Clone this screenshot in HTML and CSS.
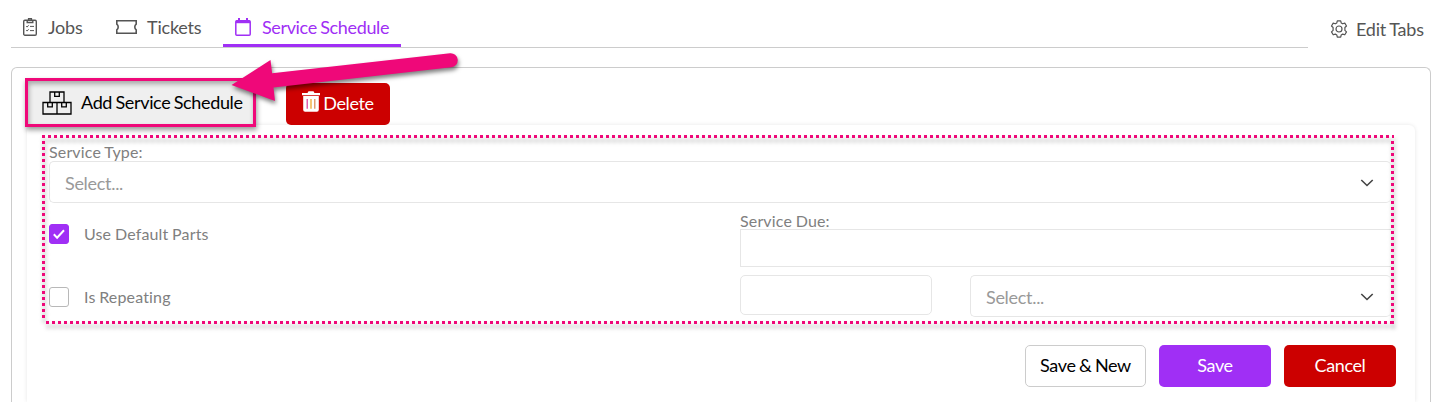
FILE: index.html
```html
<!DOCTYPE html>
<html lang="en">
<head>
  <meta charset="UTF-8">
  <meta name="viewport" content="width=device-width, initial-scale=1.0">
  <title>Service Schedule</title>
  <link rel="stylesheet" href="styles.css">
</head>
<body>
  <header class="topbar">
    <nav class="tabs">
      <a class="tab tab-jobs" href="#">
        <svg width="14" height="18" viewBox="0 0 14 18" fill="none" stroke="currentColor" stroke-width="1.4">
          <rect x=".7" y="2.2" width="12.6" height="15" rx="1.2"/>
          <path d="M4.2 2.2v2.3h5.6V2.2M5.6 2V.8h2.8V2"/>
          <path d="M3.2 8.2l.9.9 1.5-1.8M7 8.4h4M3.2 12.2l.9.9 1.5-1.8M7 12.6h4" stroke-width="1"/>
        </svg>
        <span>Jobs</span>
      </a>
      <a class="tab tab-tickets" href="#">
        <svg width="21" height="14" viewBox="0 0 21 14" fill="none" stroke="currentColor" stroke-width="1.6">
          <path d="M.8.8h19.4v3.400a3.500 3.500 0 0 0 0 5.600v3.400H.8V9.800a3.500 3.500 0 0 0 0-5.600z"/>
        </svg>
        <span>Tickets</span>
      </a>
      <a class="tab tab-schedule active" href="#">
        <svg width="16" height="18" viewBox="0 0 16 18" fill="none" stroke="currentColor" stroke-width="1.5">
          <rect x=".8" y="2.800" width="14.400" height="14.400" rx="1"/>
          <path d="M1 3.900h14" stroke-width="2.600"/>
          <path d="M4 0v4M12 0v4" stroke-width="2"/>
        </svg>
        <span>Service Schedule</span>
      </a>
    </nav>
    <a class="edit-tabs" href="#">
      <svg width="18" height="18" viewBox="0 0 18 18" fill="none" stroke="currentColor" stroke-width="1.2" stroke-linejoin="round">
        <path d="M7.3 .8h3.4l.5 2.1 1.5.9 2.1-.7 1.7 2.9-1.6 1.5v2.9l1.6 1.500-1.700 2.900-2.100-.7-1.500.9-.5 2.200H7.300l-.5-2.200-1.500-.9-2.100.7-1.700-2.900 1.600-1.500V7.500L1.500 6l1.700-2.900 2.100.7 1.500-.9z"/>
        <circle cx="9" cy="9" r="3"/>
      </svg>
      <span>Edit Tabs</span>
    </a>
  </header>

  <main class="panel">
    <div class="toolbar">
      <button class="btn-add">
        <svg width="30" height="24" viewBox="0 0 30 24" fill="none" stroke="currentColor" stroke-width="1.3">
          <path d="M8 11.5V1h14v10.5M1 11.5h28V23H1zM15 11.5V23"/>
          <path d="M12.7 1v4.3h4.6V1M5.7 11.5v4.3h4.6v-4.3M19.7 11.5v4.3h4.6v-4.3"/>
        </svg>
        <span>Add Service Schedule</span>
      </button>
      <button class="btn btn-red btn-delete">
        <svg width="18" height="21" viewBox="0 0 18 21">
          <path d="M0 2h5.500L6.500.3h5L12.500 2H18v2.300H0z" fill="#fff"/>
          <path d="M1.200 5.100h15.600v13.700a1.900 1.900 0 0 1-1.900 1.900H3.100a1.900 1.900 0 0 1-1.900-1.900z" fill="#fff"/>
          <path d="M5.200 8v9.800" stroke="#d9379a" stroke-width="1.200"/>
          <path d="M9 8v9.800" stroke="#eda01c" stroke-width="1.200"/>
          <path d="M12.800 8v9.800" stroke="#d98550" stroke-width="1.200"/>
        </svg>
        <span>Delete</span>
      </button>
    </div>

    <section class="card">
      <form class="schedule-form">
        <label class="label">Service Type:</label>
        <div class="select select-wide">
          <span>Select...</span>
          <svg class="chevron" width="14" height="8" viewBox="0 0 14 8"><path d="M1.300 1l5.700 5.500L12.700 1"/></svg>
        </div>

        <div class="columns">
          <div class="checks">
            <div class="check">
              <span class="box checked">
                <svg width="14" height="12" viewBox="0 0 14 12"><path d="M1.800 6.300l3.300 3.400L12 2.200"/></svg>
              </span>
              <span class="check-text">Use Default Parts</span>
            </div>
            <div class="check">
              <span class="box"></span>
              <span class="check-text">Is Repeating</span>
            </div>
          </div>
          <div class="due">
            <label class="label">Service Due:</label>
            <div class="input-due"></div>
            <div class="repeat">
              <div class="input-count"></div>
              <div class="select select-unit">
                <span>Select...</span>
                <svg class="chevron" width="14" height="8" viewBox="0 0 14 8"><path d="M1.300 1l5.700 5.500L12.700 1"/></svg>
              </div>
            </div>
          </div>
        </div>

        <svg class="outline" width="1352" height="189" viewBox="0 0 1352 189">
          <path d="M0 1.500H1352M4 187.500H1352M1.500 6V186M1350.500 6V189"/>
        </svg>
      </form>

      <div class="actions">
        <button class="btn btn-plain">Save &amp; New</button>
        <button class="btn btn-purple">Save</button>
        <button class="btn btn-red">Cancel</button>
      </div>
    </section>
  </main>

  <svg class="arrow" width="250" height="70" viewBox="220 40 250 70">
    <path d="M231.500 85L270.500 60l1.600 13.300L450 53.200a7 7 0 0 1 1.400 14L273.500 87.500l1.500 13.500z"/>
  </svg>
</body>
</html>
```
FILE: styles.css
```css
:root {
  --pink: #ef0879;
  --purple: #a02ff5;
  --red: #cc0000;
  --line: #e6e6e6;
  --grey: #808080;
}

* {
  box-sizing: border-box;
}

body {
  margin: 0;
  background: #fff;
  color: #555;
  font-family: Lato, "Liberation Sans", sans-serif;
  font-size: 18px;
  letter-spacing: -0.36px;
  word-spacing: -0.8px;
}

a {
  color: inherit;
  text-decoration: none;
}

svg {
  flex: none;
}

button {
  font: inherit;
  letter-spacing: inherit;
  word-spacing: inherit;
}

/* tabs */
.topbar {
  display: flex;
  height: 48px;
  padding-left: 11px;
}

.tabs {
  display: flex;
  width: 1297px;
  border-bottom: 1px solid #ccc;
}

.tab {
  display: flex;
  align-items: center;
  height: 47px;
  padding: 10px 12px 0;
  border-bottom: 3px solid transparent;
  white-space: nowrap;
}

.tab-jobs {
  width: 93px;
  gap: 11px;
  letter-spacing: -0.2px;
}

.tab-tickets {
  width: 119px;
  gap: 10px;
  letter-spacing: -0.2px;
}

.tab-schedule {
  width: 178px;
  gap: 11px;
}

.tab.active {
  color: var(--purple);
  border-bottom-color: var(--purple);
}

.edit-tabs {
  display: flex;
  align-items: center;
  gap: 8px;
  padding: 10px 0 0 22px;
  letter-spacing: -0.2px;
}

/* panel */
.panel {
  width: 1420px;
  height: 335px;
  margin: 19px 0 0 11px;
  padding: 10px 14px 0 13px;
  border: 1px solid #ccc;
  border-bottom: 0;
  border-radius: 6px 6px 0 0;
  overflow: hidden;
}

.toolbar {
  display: flex;
  align-items: center;
  gap: 30px;
  height: 47px;
}

.btn-add {
  position: relative;
  z-index: 1;
  display: flex;
  flex: none;
  align-items: center;
  gap: 9px;
  width: 231px;
  height: 49px;
  margin-top: 2px;
  padding: 0 0 0 14px;
  border: 3px solid var(--pink);
  background: #efefef;
  color: #000;
  white-space: nowrap;
  box-shadow: 1px 3px 5px rgba(0, 0, 0, 0.4), inset 1px 3px 5px rgba(0, 0, 0, 0.3);
}

.btn-add span {
  margin-top: -2px;
}

.btn {
  display: flex;
  align-items: center;
  justify-content: center;
  height: 42px;
  padding: 0 0 2px;
  border: 0;
  border-radius: 5px;
  color: #fff;
}

.btn-red {
  width: 112px;
  background: var(--red);
}

.btn-purple {
  width: 112px;
  background: var(--purple);
}

.btn-plain {
  width: 121px;
  border: 1px solid #ccc;
  background: #fff;
  color: #000;
}

.btn-delete {
  width: 104px;
  gap: 3px;
  margin-top: 5px;
  padding-bottom: 3px;
}

.btn-delete svg {
  margin-top: -2px;
}

.card {
  width: 1388px;
  height: 277px;
  margin-left: 2px;
  padding: 10px 15px 0;
  border-radius: 6px 6px 0 0;
  box-shadow: 0 0 4px rgba(0, 0, 0, 0.1);
}

/* form */
.schedule-form {
  position: relative;
  width: 1352px;
  height: 190px;
  padding: 9px 3px 0 7px;
  color: var(--grey);
  font-size: 16px;
  letter-spacing: 0.15px;
  word-spacing: -0.5px;
}

.label {
  display: block;
  height: 17px;
  line-height: 15px;
}

.select {
  display: flex;
  align-items: center;
  justify-content: space-between;
  height: 42px;
  padding: 1px 17px 0 15px;
  border: 1px solid var(--line);
  border-right: 0;
  border-radius: 5px;
  color: #999;
  font-size: 18px;
  letter-spacing: -0.3px;
}

.chevron {
  fill: none;
  stroke: #444;
  stroke-width: 1.6;
}

.columns {
  display: grid;
  grid-template-columns: 691px 1fr;
}

.checks {
  display: flex;
  flex-direction: column;
  gap: 43px;
  padding-top: 21px;
}

.check {
  display: flex;
  align-items: center;
  gap: 15px;
  height: 20px;
}

.check-text {
  margin-top: -2px;
}

.box {
  display: flex;
  align-items: center;
  justify-content: center;
  width: 20px;
  height: 20px;
  border: 1px solid #b8b8b8;
  border-radius: 3px;
}

.box.checked {
  border-color: var(--purple);
  background: var(--purple);
}

.box path {
  fill: none;
  stroke: #fff;
  stroke-width: 2;
}

.due {
  padding-top: 9px;
}

.due .label {
  line-height: 17px;
}

.input-due {
  height: 38px;
  border: 1px solid var(--line);
  border-right: 0;
}

.repeat {
  display: flex;
  gap: 38px;
  margin-top: 8px;
}

.input-count {
  width: 192px;
  height: 40px;
  border: 1px solid var(--line);
  border-radius: 5px;
}

.select-unit {
  flex: 1;
}

.actions {
  display: flex;
  justify-content: flex-end;
  gap: 13px;
  margin-top: 20px;
  padding-right: 4px;
}

/* callouts */
.outline {
  position: absolute;
  top: 0;
  left: 0;
  overflow: visible;
  fill: none;
  stroke: var(--pink);
  stroke-width: 3;
  stroke-dasharray: 3 3;
  filter: drop-shadow(1px 4px 2px rgba(0, 0, 0, 0.35));
}

.arrow {
  position: absolute;
  top: 40px;
  left: 220px;
  z-index: 2;
  fill: var(--pink);
  filter: drop-shadow(1px 3px 2px rgba(0, 0, 0, 0.5));
}
```
